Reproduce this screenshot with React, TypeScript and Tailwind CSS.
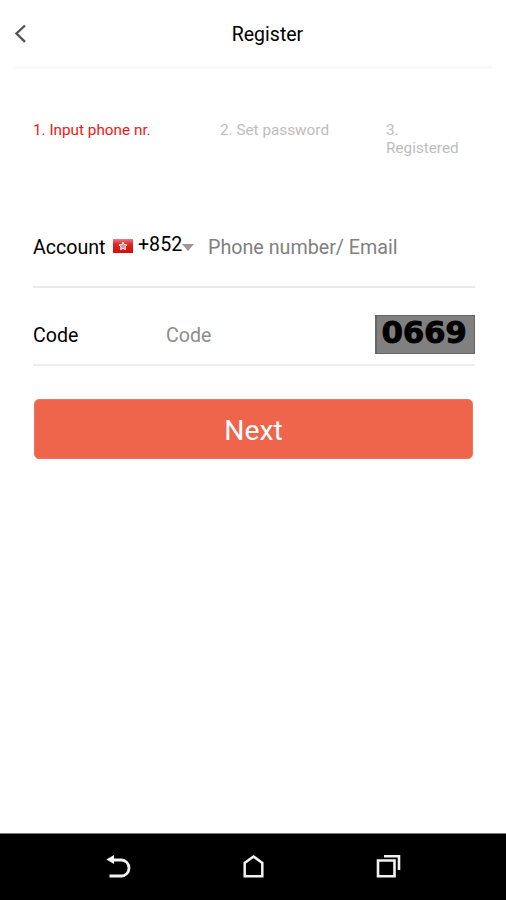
export default function App() {
  return (
    <div className="flex h-[900px] w-[506px] flex-col overflow-hidden bg-white font-[Roboto,sans-serif] text-black">
      <header className="mr-[14px] ml-[15px] flex h-[69px] items-center border-b-[3px] border-[#f8f8f8] pt-[3px]">
        <button aria-label="Back" className="w-6">
          <svg className="-mt-px" width="12" height="20" viewBox="0 0 12 20" fill="none" stroke="#555" strokeWidth="2.4">
            <path d="M10 1.500 1.500 9.500 10 17.800" />
          </svg>
        </button>
        <h1 className="flex-1 pl-1 text-center text-[19.5px] leading-6">Register</h1>
      </header>

      <ol className="mt-[53px] ml-[33px] flex h-[101px] text-[15.3px] leading-[17.5px] text-[#bdbdbd]">
        <li className="w-[187px] text-[#f21616]">1. Input phone nr.</li>
        <li className="w-[166px]">2. Set password</li>
        <li className="w-[76px]">3. Registered</li>
      </ol>

      <div className="mr-[31px] ml-[33px] flex h-[65px] border-b-2 border-[#e9e9e9] pt-[13px] text-[19.6px] leading-6">
        <label className="w-[80px]">Account</label>
        <svg className="mt-[3px]" width="20" height="14" viewBox="0 0 20 14">
          <defs>
            <linearGradient id="flag" x1="0" y1="0" x2="0" y2="1">
              <stop offset="0" stopColor="#e98080" />
              <stop offset=".35" stopColor="#dc2828" />
              <stop offset="1" stopColor="#d20d0d" />
            </linearGradient>
          </defs>
          <path fill="url(#flag)" d="M0 0h20v14H0z" />
          <path d="m10 3 1.2 2.6 2.8.3-2 2 .5 2.8L10 9.400l-2.500 1.300.5-2.800-2-2 2.800-.3z" fill="#e88" stroke="#fff" strokeWidth="1" />
        </svg>
        <span className="-mt-[3px] ml-[5px] w-[44px]">+852</span>
        <svg className="mt-[8px]" width="12" height="7" viewBox="0 0 12 7">
          <path d="M0 0h12L6 7z" fill="#999" />
        </svg>
        <span className="ml-[14px] text-[19.7px] text-[#808080]">Phone number/ Email</span>
      </div>

      <div className="mr-[31px] ml-[33px] flex h-[78px] border-b-2 border-[#eeeeee] pt-[27px] text-[19.6px] leading-6">
        <label className="mt-[9px] w-[133px]">Code</label>
        <span className="mt-[9px] flex-1 text-[#8d8d8d]">Code</span>
        <div className="flex h-[39px] w-[100px] justify-center border border-l-2 border-[#666] bg-[#808080] pr-[3px] font-['DejaVu_Sans',sans-serif] text-[31px] leading-[33px] font-bold tracking-[-0.3px] [-webkit-text-stroke:0.8px_#000]">
          0669
        </div>
      </div>

      <button className="mr-[33px] ml-[34px] mt-[33px] h-[60px] rounded-[5px] border border-[#f3745c] bg-[#ef654c] pt-[3px] text-[28.300px] leading-8 text-white">
        Next
      </button>

      <nav className="mt-auto flex h-[67px] border-t border-[#777] bg-black pl-[105px]">
        <svg className="mt-[19px]" width="28" height="28" viewBox="0 0 28 28" fill="none" stroke="#f2f2f2" strokeWidth="2.8">
          <path d="M6 7h10.500a7.500 8 0 0 1 0 16H4.500" />
          <path d="M1.300 6.500 9 2v9z" fill="#f2f2f2" stroke="none" />
        </svg>
        <svg className="mt-[19px] ml-[107px]" width="28" height="28" viewBox="0 0 28 28" fill="none" stroke="#f2f2f2" strokeWidth="2.500">
          <path d="M4.700 23.200V10L13.500 3.500 22.300 10v13.200z" />
        </svg>
        <svg className="mt-[19px] ml-[107px]" width="28" height="28" viewBox="0 0 28 28" fill="none" stroke="#f2f2f2" strokeWidth="2.600">
          <path d="M3 7.500h16.500v15.700H3z" />
          <path d="M9 3.200h15V17" />
        </svg>
      </nav>
    </div>
  );
}
